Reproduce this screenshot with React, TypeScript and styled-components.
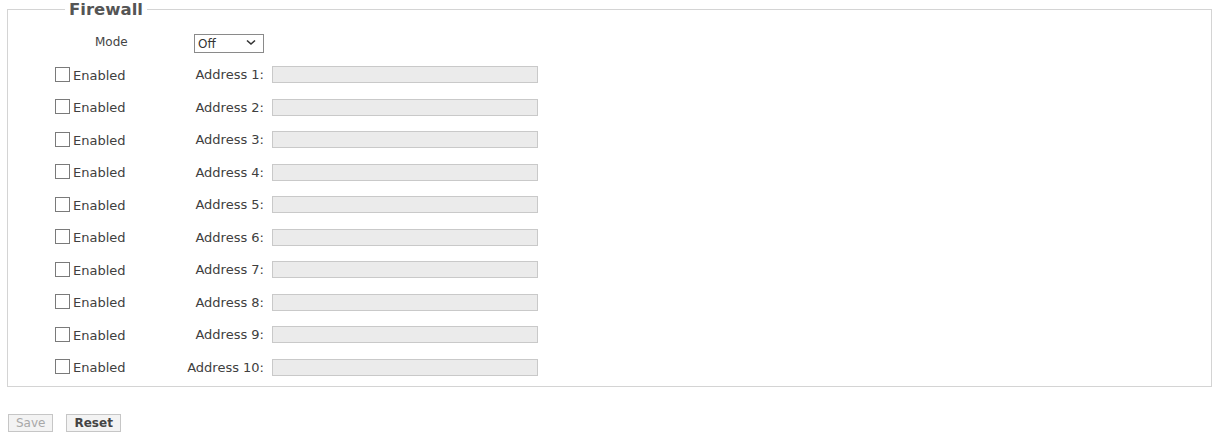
import React from "react";
import styled, { createGlobalStyle } from "styled-components";

const GlobalStyle = createGlobalStyle`
  html, body {
    margin: 0;
    padding: 0;
    background: #ffffff;
  }
  body {
    font-family: "DejaVu Sans", Verdana, sans-serif;
    color: #3a3a3a;
  }
`;

const Page = styled.div`
  width: 1215px;
  height: 435px;
  padding: 0 3px 0 7px;
  box-sizing: border-box;
`;

const Fieldset = styled.fieldset`
  margin: 0;
  padding: 7px 0 2px 0;
  border: 1px solid #d4d4d4;
  min-width: 0;
`;

const Legend = styled.legend`
  margin-left: 57px;
  padding: 0 4px;
  font-size: 16.5px;
  font-weight: bold;
  color: #555555;
  line-height: 19px;
`;

const Row = styled.div`
  display: grid;
  grid-template-columns: 47px 128px 83px 1fr;
  column-gap: 0;
  align-items: center;
  height: 32.5px;
`;

const ModeLabel = styled.span`
  grid-column: 2;
  padding-left: 40px;
  font-size: 12px;
  color: #444;
`;

const SelectWrap = styled.div`
  grid-column: 3;
  position: relative;
  margin-left: 11px;
  width: 70px;
  height: 19px;
`;

const Select = styled.select`
  appearance: none;
  -webkit-appearance: none;
  width: 70px;
  height: 19px;
  box-sizing: border-box;
  border: 1px solid #8a8a8a;
  border-radius: 0;
  background: #fff;
  font-family: "DejaVu Sans", Verdana, sans-serif;
  font-size: 12px;
  color: #333;
  padding: 0 0 0 3px;
  margin: 0;
`;

const Chevron = styled.svg`
  position: absolute;
  right: 8px;
  top: 6px;
  pointer-events: none;
`;

const Check = styled.label`
  grid-column: 2;
  display: flex;
  align-items: flex-end;
  font-size: 13px;
  color: #404040;
`;

const Box = styled.input`
  appearance: none;
  -webkit-appearance: none;
  width: 15px;
  height: 15px;
  margin: 0 3px 1px 0;
  border: 1px solid #7a7a7a;
  background: #fff;
  box-sizing: border-box;
`;

const AddrLabel = styled.span`
  grid-column: 3;
  text-align: right;
  padding-right: 2px;
  font-size: 13px;
  color: #404040;
  white-space: nowrap;
`;

const AddrInput = styled.input`
  grid-column: 4;
  margin-left: 6px;
  width: 266px;
  height: 17px;
  box-sizing: border-box;
  border: 1px solid #c9c9c9;
  background: #ebebeb;
  padding: 0;
`;

const Actions = styled.div`
  display: flex;
  gap: 13px;
  margin-top: 27px;
  padding-left: 1px;
`;

const Button = styled.button<{ $muted?: boolean }>`
  height: 18px;
  padding: 0 7px;
  font-family: "DejaVu Sans", Verdana, sans-serif;
  font-size: 12px;
  font-weight: ${(p) => (p.$muted ? "normal" : "bold")};
  line-height: 16px;
  border: 1px solid #c6c6c6;
  border-radius: 0;
  background: #f3f3f3;
  color: ${(p) => (p.$muted ? "#a8a8a8" : "#444")};
  margin: 0;
`;

const addresses = Array.from({ length: 10 }, (_, i) => i + 1);

export default function App() {
  return (
    <>
      <GlobalStyle />
      <Page>
        <Fieldset>
          <Legend>Firewall</Legend>
          <Row>
            <ModeLabel>Mode</ModeLabel>
            <SelectWrap>
              <Select defaultValue="off">
                <option value="off">Off</option>
                <option value="on">On</option>
              </Select>
              <Chevron width="10" height="7" viewBox="0 0 10 7">
                <path d="M1 1.5 L5 5 L9 1.5" fill="none" stroke="#333" strokeWidth="1.6" />
              </Chevron>
            </SelectWrap>
          </Row>
          {addresses.map((n) => (
            <Row key={n}>
              <Check>
                <Box type="checkbox" />
                Enabled
              </Check>
              <AddrLabel>Address {n}:</AddrLabel>
              <AddrInput type="text" disabled />
            </Row>
          ))}
        </Fieldset>
        <Actions>
          <Button $muted disabled>
            Save
          </Button>
          <Button>Reset</Button>
        </Actions>
      </Page>
    </>
  );
}
